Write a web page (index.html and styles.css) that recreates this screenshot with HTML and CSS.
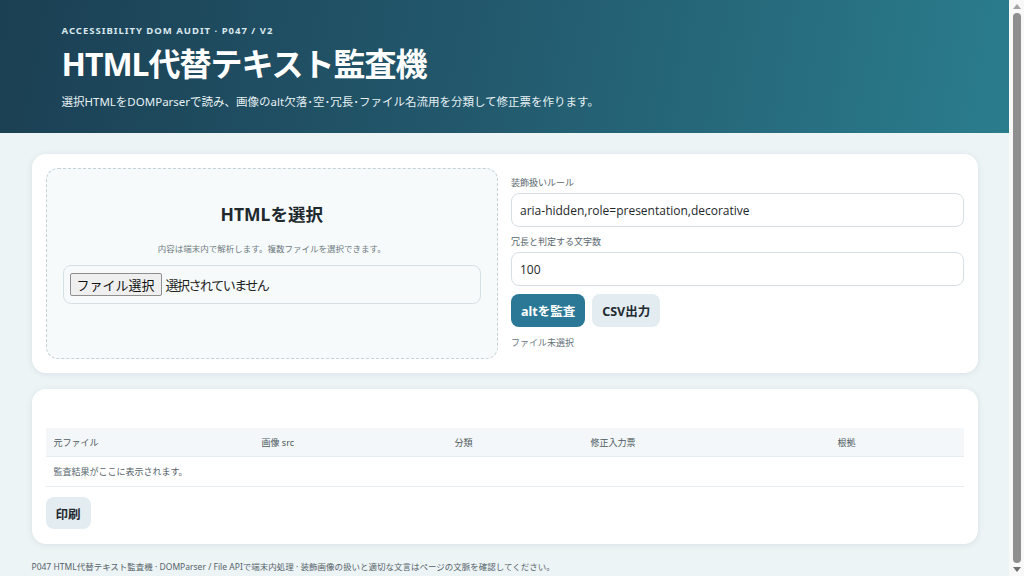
FILE: index.html
```html
<!DOCTYPE html>
<html lang="ja">
  <head>
    <meta charset="UTF-8" />
    <meta name="viewport" content="width=device-width, initial-scale=1.0" />
    <title>HTML代替テキスト監査機</title>
    <link rel="stylesheet" href="styles.css">
  </head>
  <body>
    <header class="hero">
      <div class="hero-inner">
        <div class="kicker">Accessibility DOM Audit · P047 / v2</div>
        <h1>HTML代替テキスト監査機</h1>
        <p class="lead">選択HTMLをDOMParserで読み、画像のalt欠落･空･冗長･ファイル名流用を分類して修正票を作ります。</p>
      </div>
    </header>
    <main class="wrap">
      <section class="card setup">
        <div class="drop">
          <h2>HTMLを選択</h2>
          <p class="hint">内容は端末内で解析します。複数ファイルを選択できます。</p>
          <label class="file-box">
            <span class="file-btn">ファイル選択</span>
            <span class="file-name">選択されていません</span>
          </label>
        </div>
        <div class="form">
          <label class="field-label">装飾扱いルール</label>
          <input class="field" type="text" value="aria-hidden,role=presentation,decorative" />
          <label class="field-label">冗長と判定する文字数</label>
          <input class="field" type="text" value="100" />
          <div class="actions">
            <button class="btn primary">altを監査</button>
            <button class="btn">CSV出力</button>
          </div>
          <div class="status">ファイル未選択</div>
        </div>
      </section>
      <section class="card results">
        <div class="summary"></div>
        <table class="result-table">
          <thead>
            <tr>
              <th class="c-file">元ファイル</th>
              <th class="c-src">画像 src</th>
              <th class="c-kind">分類</th>
              <th class="c-fix">修正入力票</th>
              <th class="c-why">根拠</th>
            </tr>
          </thead>
          <tbody>
            <tr>
              <td colspan="5" class="empty">監査結果がここに表示されます。</td>
            </tr>
          </tbody>
        </table>
        <button class="btn print">印刷</button>
      </section>
      <footer class="foot">P047 HTML代替テキスト監査機 · DOMParser / File APIで端末内処理 · 装飾画像の扱いと適切な文言はページの文脈を確認してください。</footer>
    </main>
    <div class="scrollbar" aria-hidden="true">
      <span class="arrow up"></span>
      <span class="thumb"></span>
      <span class="arrow down"></span>
    </div>
  </body>
</html>
```

FILE: styles.css
```css
body {
  margin: 0 15px 0 0;
  font-family: "Noto Sans", "Noto Sans CJK JP", sans-serif;
  background: #edf4f6;
  color: #1f2a30;
}
.scrollbar {
  position: fixed;
  top: 0;
  right: 0;
  width: 15px;
  height: 100%;
  background: #f8f8f8;
  display: flex;
  flex-direction: column;
  align-items: center;
  padding: 4px 0;
  box-sizing: border-box;
  gap: 4px;
}
.thumb {
  flex: 1;
  width: 8px;
  background: #8f8f8f;
  border-radius: 4px;
}
.arrow {
  width: 0;
  height: 0;
  border-left: 4px solid transparent;
  border-right: 4px solid transparent;
}
.arrow.up {
  border-bottom: 5px solid #a3a3a3;
}
.arrow.down {
  border-top: 5px solid #6f6f6f;
}
.hero {
  background: linear-gradient(100deg, #1b3f53 0%, #235a6e 50%, #2a7d8d 100%);
  color: white;
  height: 133px;
}
.hero-inner {
  max-width: 886px;
  margin: 0 auto;
  padding: 24px 30px 0;
}
.kicker {
  font-size: 9.5px;
  font-weight: bold;
  letter-spacing: 1px;
  text-transform: uppercase;
  color: #d8e8ee;
}
.hero h1 {
  margin: 4px 0 0;
  font-size: 32px;
  line-height: 46px;
  font-weight: bold;
  letter-spacing: -1px;
}
.lead {
  margin: 6px 0 0;
  font-size: 11.5px;
  color: #e6f1f4;
}
.wrap {
  max-width: 946px;
  margin: 0 auto;
  padding: 21px 0 18px;
}
.card {
  background: white;
  border-radius: 14px;
  box-shadow: 0 1px 6px rgba(30, 60, 80, 0.1);
  padding: 14px;
}
.setup {
  display: grid;
  grid-template-columns: 1fr 1fr;
  gap: 13px;
}
.drop {
  border: 1.5px dashed #c4d2d8;
  border-radius: 12px;
  background: #f7fafb;
  padding: 27px 16px 54px;
  text-align: center;
}
.drop h2 {
  margin: 0;
  font-size: 17.5px;
  line-height: 36px;
  font-weight: bold;
  color: #20292e;
}
.hint {
  margin: 10px 0 11px;
  font-size: 8.5px;
  color: #6d7a80;
}
.file-box {
  display: flex;
  align-items: center;
  gap: 4px;
  border: 1px solid #d6e0e4;
  border-radius: 8px;
  padding: 7px 6px;
  text-align: left;
  font-size: 13px;
}
.file-btn {
  border: 1px solid #8f8f8f;
  background: #efefef;
  border-radius: 2px;
  padding: 1px 6px;
  color: #111;
}
.file-name {
  color: #222;
  letter-spacing: -1.5px;
}
.form {
  padding-top: 8px;
}
.field-label {
  display: block;
  font-size: 9px;
  color: #56646b;
  margin-bottom: 4px;
}
.field {
  display: block;
  box-sizing: border-box;
  width: 100%;
  height: 34px;
  border: 1px solid #d6e0e4;
  border-radius: 8px;
  padding: 0 8px;
  font-family: "Open Sans", "Noto Sans", sans-serif;
  font-size: 12px;
  color: #1e272b;
  margin-bottom: 8px;
}
.actions {
  display: flex;
  gap: 7px;
  margin-top: 2px;
}
.btn {
  border: none;
  border-radius: 8px;
  height: 33px;
  padding: 0 10px;
  font-family: "Noto Sans", "Noto Sans CJK JP", sans-serif;
  font-size: 12.5px;
  font-weight: bold;
  background: #e3ecf0;
  color: #1f2a30;
}
.btn.primary {
  background: #2a7896;
  color: white;
}
.status {
  margin-top: 9px;
  font-size: 9px;
  color: #66747a;
}
.results {
  margin-top: 16px;
  padding-bottom: 15px;
}
.summary {
  height: 25px;
}
.result-table {
  width: 100%;
  border-collapse: collapse;
  font-size: 9px;
}
.result-table th {
  background: #f3f7f9;
  text-align: left;
  font-weight: normal;
  color: #4e5b61;
  height: 28px;
  padding: 0 8px;
  border-bottom: 1px solid #e7eef1;
}
.c-file { width: 192px; }
.c-src { width: 177px; }
.c-kind { width: 120px; }
.c-fix { width: 231px; }
.result-table td {
  height: 29px;
  padding: 0 8px;
  color: #55636a;
  border-bottom: 1px solid #e7eef1;
}
.print {
  margin-top: 10px;
  height: 32px;
}
.foot {
  margin: 16px 0 0;
  font-size: 8.5px;
  color: #55636a;
}
```
